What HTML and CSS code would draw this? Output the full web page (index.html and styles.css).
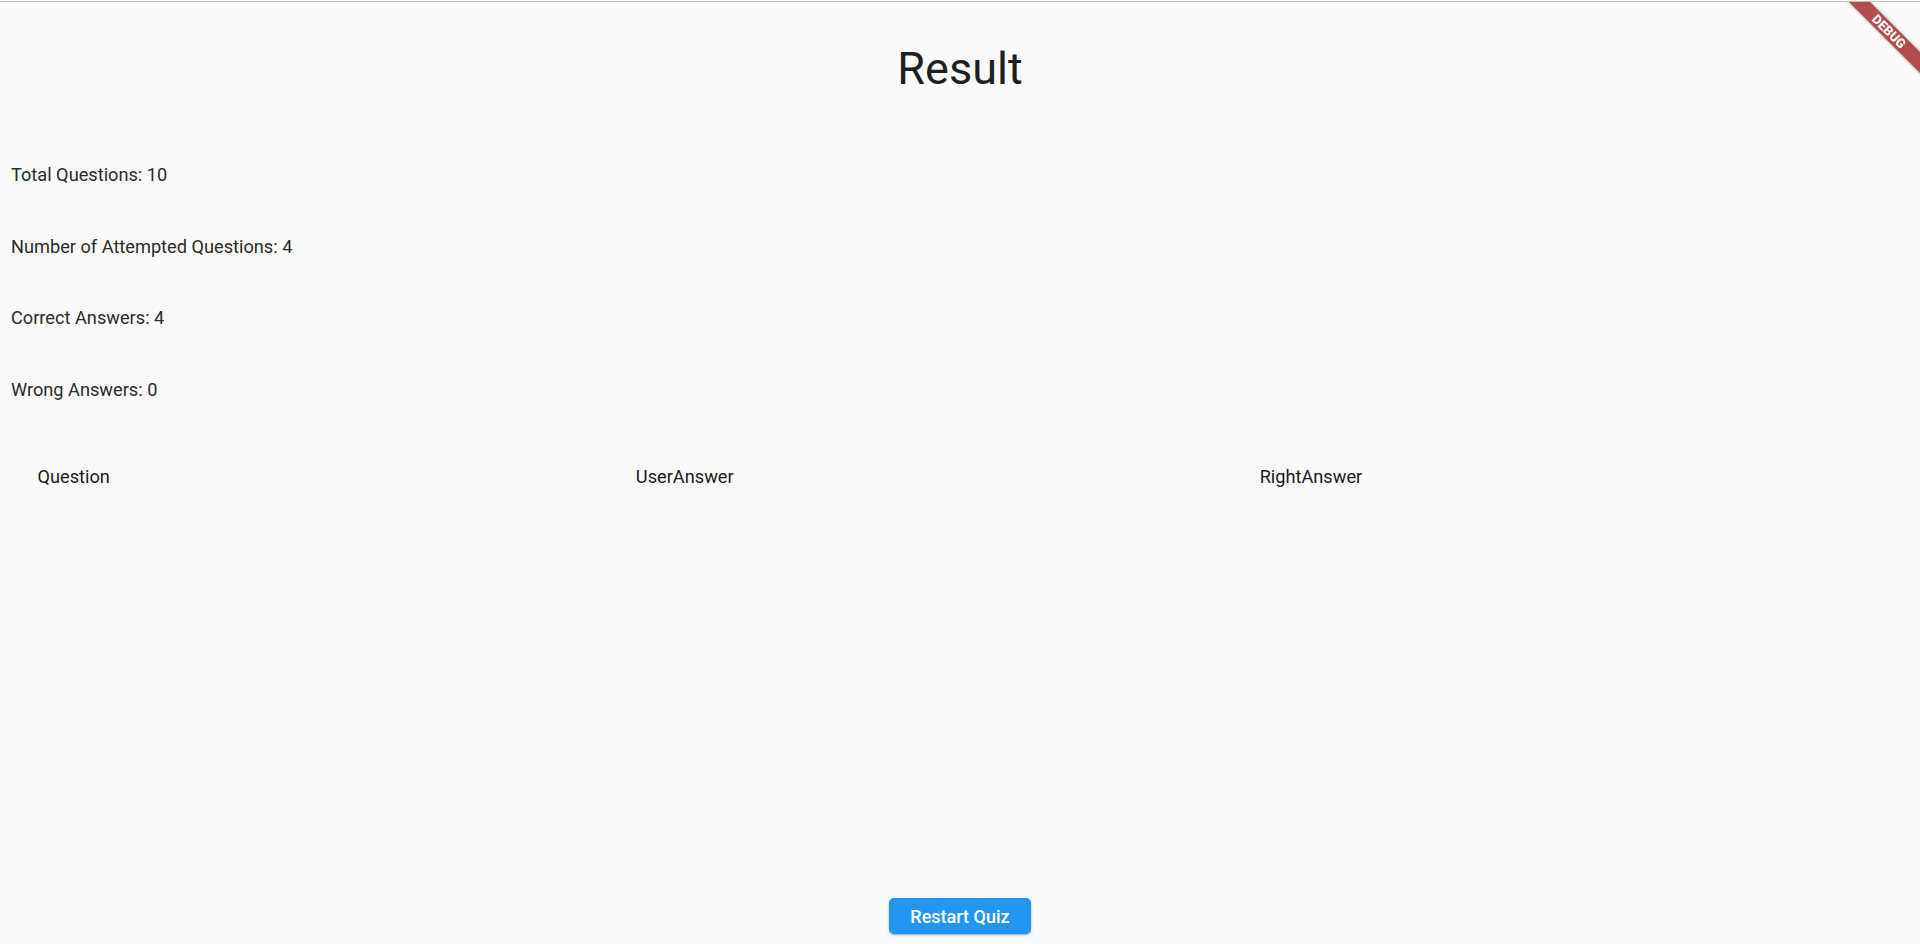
FILE: index.html
```html
<!DOCTYPE html>
<html lang="en">
<head>
<meta charset="utf-8">
<title>Result</title>
<link rel="stylesheet" href="styles.css">
</head>
<body>
<div class="topline"></div>
<main class="page">
  <h1 class="title">Result</h1>
  <section class="stats">
    <p class="stat">Total Questions: 10</p>
    <p class="stat">Number of Attempted Questions: 4</p>
    <p class="stat">Correct Answers: 4</p>
    <p class="stat">Wrong Answers: 0</p>
  </section>
  <div class="table">
    <div class="thead">
      <span class="th">Question</span>
      <span class="th">UserAnswer</span>
      <span class="th">RightAnswer</span>
    </div>
  </div>
  <div class="footer">
    <button class="btn" type="button">Restart Quiz</button>
  </div>
</main>
<div class="banner-wrap"><div class="banner">DEBUG</div></div>
</body>
</html>
```

FILE: styles.css
```css
html, body {
  margin: 0;
  padding: 0;
  height: 100%;
}

body {
  background: #fafafa;
  font-family: Roboto, "Noto Sans", "Liberation Sans", sans-serif;
  color: #212121;
  overflow: hidden;
}

.topline {
  margin-top: 1px;
  height: 1px;
  background: #c2c2c2;
}

.page {
  display: flex;
  flex-direction: column;
  height: calc(100vh - 2px);
}

.title {
  margin: 40px 0 0;
  font-size: 45px;
  line-height: 54px;
  font-weight: 400;
  text-align: center;
  color: #1f1f1f;
}

.stats {
  margin-top: 68px;
  padding-left: 11px;
  display: flex;
  flex-direction: column;
  gap: 49.7px;
}

.stat {
  margin: 0;
  font-size: 18.2px;
  line-height: 22px;
  color: #2b2b2b;
}

.table {
  flex: 1;
  margin-top: 64.75px;
}

.thead {
  display: flex;
  gap: 526px;
  padding-left: 37.5px;
}

.th {
  font-size: 18.2px;
  line-height: 22px;
  color: #1a1a1a;
}

.footer {
  display: flex;
  justify-content: center;
  padding-bottom: 10px;
}

.btn {
  height: 36px;
  padding: 0 21px;
  border: none;
  border-radius: 5px;
  background: #2196f3;
  color: #ffffff;
  font-family: Roboto, "Noto Sans", "Liberation Sans", sans-serif;
  font-size: 18px;
  font-weight: 500;
  box-shadow: 0 1px 3px rgba(0, 0, 0, 0.25), 0 1px 1px rgba(0, 0, 0, 0.12);
  cursor: pointer;
}

.banner-wrap {
  position: fixed;
  top: 2px;
  right: 0;
  width: 100px;
  height: 100px;
  overflow: hidden;
  pointer-events: none;
}

.banner {
  position: absolute;
  left: 9px;
  top: 21.5px;
  width: 120px;
  height: 15px;
  transform: rotate(45deg);
  background: #b44c4c;
  box-shadow: 0 0 4px rgba(0, 0, 0, 0.3);
  color: #ffffff;
  font-family: Roboto, "Liberation Sans", sans-serif;
  font-weight: 900;
  font-size: 13px;
  line-height: 15px;
  text-align: center;
}
```
